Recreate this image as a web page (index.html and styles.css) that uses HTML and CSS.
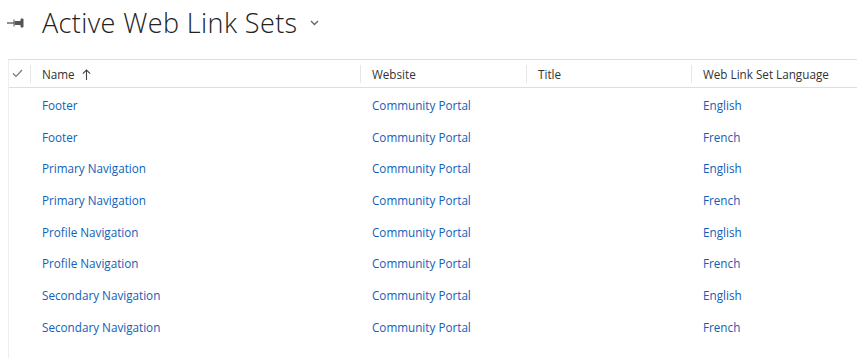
FILE: index.html
```html
<!DOCTYPE html>
<html lang="en">
<head>
<meta charset="UTF-8">
<title>Active Web Link Sets</title>
<link rel="stylesheet" href="styles.css">
</head>
<body>
<!-- View title -->
<div class="view-header">
  <svg class="pin" width="20" height="12" viewBox="0 0 20 12">
    <path d="M1 6H8" stroke="#555" stroke-width="1.3"/>
    <path d="M8 2.5V9.5M9 4.5H15V7.5H9Z M15 2V10H17V2Z" fill="#555" stroke="#555" stroke-width="1"/>
  </svg>
  <h1 class="view-title">Active Web Link Sets</h1>
  <svg class="chev" width="9" height="6" viewBox="0 0 9 6">
    <path d="M1 1L4.5 4.5L8 1" fill="none" stroke="#666" stroke-width="1.4"/>
  </svg>
</div>

<!-- Grid -->
<div class="grid">
  <div class="grid-head">
    <div class="cell-check">
      <svg width="11" height="9" viewBox="0 0 11 9"><path d="M1 4.5L4 7.5L10 1" fill="none" stroke="#777" stroke-width="1.2"/></svg>
    </div>
    <div class="hd"><span class="hd-label">Name
      <svg class="sort" width="9" height="11" viewBox="0 0 9 11"><path d="M4.5 11V1M0.8 4.7L4.5 1L8.2 4.7" fill="none" stroke="#444" stroke-width="1.1"/></svg>
    </span></div>
    <div class="hd"><span class="hd-label">Website</span></div>
    <div class="hd"><span class="hd-label">Title</span></div>
    <div class="hd"><span class="hd-label">Web Link Set Language</span></div>
  </div>

  <div class="grid-body">
    <div class="row"><span></span><a class="lnk">Footer</a><a class="lnk">Community Portal</a><span></span><a class="lnk">English</a></div>
    <div class="row"><span></span><a class="lnk">Footer</a><a class="lnk">Community Portal</a><span></span><a class="lnk">French</a></div>
    <div class="row"><span></span><a class="lnk">Primary Navigation</a><a class="lnk">Community Portal</a><span></span><a class="lnk">English</a></div>
    <div class="row"><span></span><a class="lnk">Primary Navigation</a><a class="lnk">Community Portal</a><span></span><a class="lnk">French</a></div>
    <div class="row"><span></span><a class="lnk">Profile Navigation</a><a class="lnk">Community Portal</a><span></span><a class="lnk">English</a></div>
    <div class="row"><span></span><a class="lnk">Profile Navigation</a><a class="lnk">Community Portal</a><span></span><a class="lnk">French</a></div>
    <div class="row"><span></span><a class="lnk">Secondary Navigation</a><a class="lnk">Community Portal</a><span></span><a class="lnk">English</a></div>
    <div class="row"><span></span><a class="lnk">Secondary Navigation</a><a class="lnk">Community Portal</a><span></span><a class="lnk">French</a></div>
  </div>
</div>
</body>
</html>
```

FILE: styles.css
```css
:root {
  --link:#1160b7;
  --text:#333;
  --line:#dedede;
}

html, body {
  margin:0; padding:0;
  height:100%;
  background:#fff;
  color:var(--text);
  font-family:'Open Sans', 'Noto Sans', sans-serif;
  overflow:hidden;
}

/* Title bar */
.view-header {
  display:flex; align-items:center;
  height:44px;
  padding-left:6px;
}
.pin {margin-top:1px;}
.view-title {
  margin:0 0 0 16px;
  font-size:27px; font-weight:300;
  color:#222;
  letter-spacing:0.4px;
}
.chev {margin-left:12px; margin-top:2px;}

/* Grid */
.grid {
  margin:15px 0 0 8px;
  border-top:1px solid var(--line);
  border-left:1px solid #eee;
  height:calc(100% - 60px);
}
.grid-head, .row {
  display:grid;
  grid-template-columns:21px 330px 166px 165px 1fr;
}
.grid-head {
  height:27px;
  border-bottom:1px solid var(--line);
  font-size:11.7px;
}
.cell-check {display:flex; align-items:center; padding-left:3px;}
.hd {display:flex; align-items:center;}
.hd-label {
  border-left:1px solid #e6e6e6;
  padding-left:11px;
  line-height:18px;
  white-space:nowrap;
}
.sort {margin-left:4px; vertical-align:-1px;}

.grid-body {padding-top:1px;}
.row {
  height:31.7px;
  align-items:center;
  font-size:11.7px;
}
.lnk {color:var(--link); padding-left:12px; white-space:nowrap;}
```
